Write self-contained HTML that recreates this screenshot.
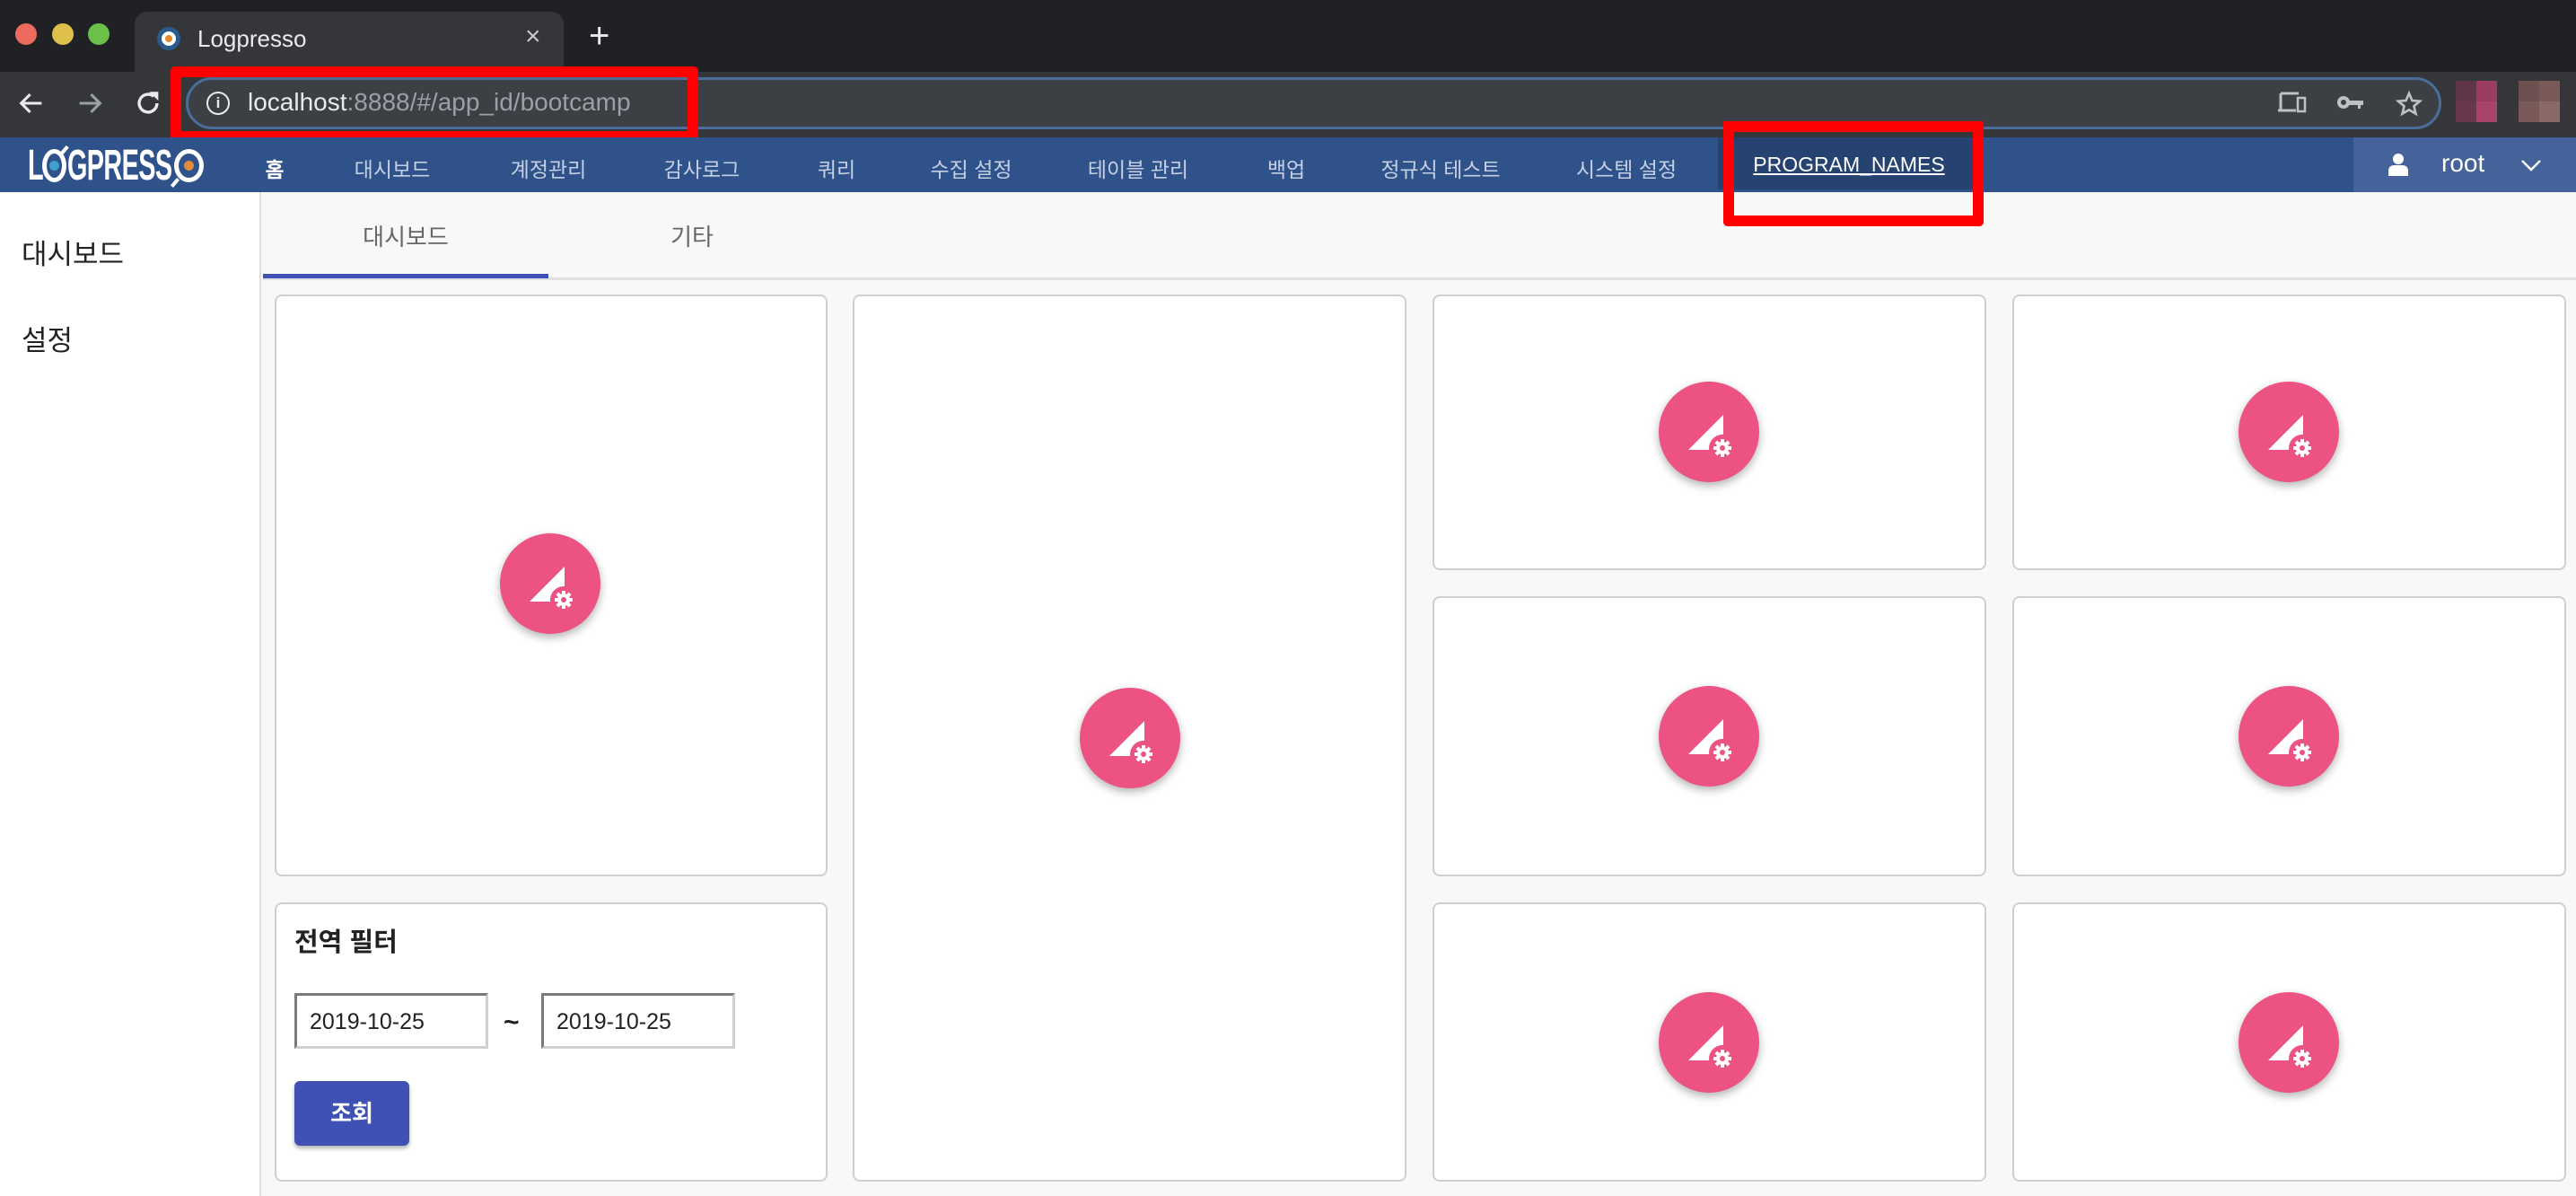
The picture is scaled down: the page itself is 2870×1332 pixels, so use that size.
<!DOCTYPE html>
<html><head><meta charset="utf-8">
<style>
*{box-sizing:border-box;margin:0;padding:0}
body{width:2870px;height:1332px;overflow:hidden;background:#f8f8f8;font-family:"Liberation Sans","Noto Sans CJK KR",sans-serif;position:relative}
.abs{position:absolute}
.card{position:absolute;background:#fff;border:2px solid #cfcfcf;border-radius:8px}
.fab{position:absolute;width:112px;height:112px;border-radius:50%;background:#ec5282;box-shadow:0 4px 10px rgba(0,0,0,.3);margin:-56px 0 0 -56px}
.fab svg{position:absolute;left:0;top:0}
.nav{position:absolute;top:170px;font-size:23px;color:#c5d0e4;transform:translateX(-50%);white-space:nowrap}
</style></head><body>
<!-- tab strip -->
<div class="abs" style="left:0;top:0;width:2870px;height:80px;background:#202124"></div>
<div class="abs" style="left:17px;top:26px;width:24px;height:24px;border-radius:50%;background:#ec6a5e"></div>
<div class="abs" style="left:58px;top:26px;width:24px;height:24px;border-radius:50%;background:#e0c04c"></div>
<div class="abs" style="left:98px;top:26px;width:24px;height:24px;border-radius:50%;background:#6cc04a"></div>
<div class="abs" style="left:150px;top:13px;width:478px;height:70px;background:#35363a;border-radius:14px 14px 0 0"></div>
<div class="abs" style="left:175px;top:30px;width:26px;height:26px;border-radius:50%;background:#fff;border:5px solid #2b5a8c"></div>
<div class="abs" style="left:184px;top:39px;width:8px;height:8px;border-radius:50%;background:#e68a2e"></div>
<div class="abs" style="left:220px;top:28px;font-size:26px;color:#e8eaed">Logpresso</div>
<div class="abs" style="left:585px;top:24px;font-size:30px;color:#c8c8c8">×</div>
<div class="abs" style="left:656px;top:18px;font-size:40px;color:#e8eaed">+</div>
<!-- toolbar -->
<div class="abs" style="left:0;top:80px;width:2870px;height:73px;background:#35363a"></div>
<svg class="abs" style="left:18px;top:98px" width="34" height="34" viewBox="0 0 24 24"><path d="M20 12H5M11 5l-7 7 7 7" stroke="#e8eaed" stroke-width="2.2" fill="none"/></svg>
<svg class="abs" style="left:83px;top:98px" width="34" height="34" viewBox="0 0 24 24"><path d="M4 12h15M13 5l7 7-7 7" stroke="#9aa0a6" stroke-width="2.2" fill="none"/></svg>
<svg class="abs" style="left:148px;top:98px" width="34" height="34" viewBox="0 0 24 24"><path d="M19 12a7 7 0 1 1-2.5-5.4" stroke="#e8eaed" stroke-width="2.4" fill="none"/><path d="M13 3h7v7z" fill="#e8eaed"/></svg>
<div class="abs" style="left:207px;top:86px;width:2513px;height:58px;border-radius:29px;background:#3c3f43;border:3px solid #4a6e99"></div>
<div class="abs" style="left:230px;top:102px;width:26px;height:26px;border-radius:50%;border:2.5px solid #e8eaed;color:#e8eaed;font-size:17px;font-weight:bold;text-align:center;line-height:21px">i</div>
<div class="abs" style="left:276px;top:98px;font-size:28px;color:#9aa0a6"><span style="color:#e8eaed">localhost</span>:8888/#/app_id/bootcamp</div>
<div class="abs" style="left:190px;top:74px;width:588px;height:84px;border:12px solid #ff0000;border-radius:5px"></div>
<svg class="abs" style="left:2538px;top:102px" width="32" height="26" viewBox="0 0 32 26"><path d="M3 2h20M3 2v18M0 21h20" stroke="#bdc1c6" stroke-width="3" fill="none"/><rect x="22" y="7" width="8" height="15" stroke="#bdc1c6" stroke-width="2.5" fill="none"/></svg>
<svg class="abs" style="left:2604px;top:104px" width="30" height="20" viewBox="0 0 30 20"><circle cx="7" cy="10" r="5" stroke="#bdc1c6" stroke-width="4" fill="none"/><path d="M12 8h17v5h-3v4h-3v-4h-11z" fill="#bdc1c6"/></svg>
<svg class="abs" style="left:2668px;top:100px" width="32" height="32" viewBox="0 0 24 24"><path d="M12 3l2.6 6 6.4.5-4.9 4.2 1.5 6.3L12 16.7 6.4 20l1.5-6.3L3 9.5l6.4-.5z" stroke="#bdc1c6" stroke-width="2" fill="none"/></svg>
<div class="abs" style="left:2736px;top:90px;width:23px;height:23px;background:#5e3549"></div>
<div class="abs" style="left:2736px;top:113px;width:23px;height:23px;background:#6a364e"></div>
<div class="abs" style="left:2759px;top:90px;width:23px;height:23px;background:#9a3d60"></div>
<div class="abs" style="left:2759px;top:113px;width:23px;height:23px;background:#a84467"></div>
<div class="abs" style="left:2806px;top:90px;width:23px;height:23px;background:#6e5050"></div>
<div class="abs" style="left:2806px;top:113px;width:23px;height:23px;background:#7a5959"></div>
<div class="abs" style="left:2829px;top:90px;width:23px;height:23px;background:#7a5a58"></div>
<div class="abs" style="left:2829px;top:113px;width:23px;height:23px;background:#8a6a66"></div>
<!-- navbar -->
<div class="abs" style="left:0;top:153px;width:2870px;height:61px;background:#2f528a"></div>
<div class="abs" style="left:1914px;top:153px;width:286px;height:58px;background:#264270"></div>
<div class="abs" style="left:2622px;top:153px;width:248px;height:61px;background:#45639a"></div>
<!-- logo -->
<div class="abs" style="left:31px;top:163px;font-size:48px;line-height:44px;color:#fff;font-weight:bold;transform:scaleX(.6);transform-origin:left top">L</div>
<div class="abs" style="left:47px;top:166px;width:27px;height:37px;border-radius:50%;border:5px solid #fff"></div>
<div class="abs" style="left:55px;top:179px;width:11px;height:11px;border-radius:50%;background:#3fa0cc"></div>
<div class="abs" style="left:70px;top:162px;width:4px;height:10px;background:#fff;transform:rotate(40deg)"></div>
<div class="abs" style="left:75px;top:163px;font-size:48px;line-height:44px;color:#fff;font-weight:bold;transform:scaleX(.6);transform-origin:left top;white-space:nowrap;letter-spacing:-1px">GPRESS</div>
<div class="abs" style="left:194px;top:166px;width:33px;height:37px;border-radius:50%;border:5px solid #fff"></div>
<div class="abs" style="left:205px;top:179px;width:11px;height:11px;border-radius:50%;background:#e08a3a"></div>
<div class="abs" style="left:193px;top:198px;width:4px;height:11px;background:#fff;transform:rotate(40deg)"></div>
<div class="nav" style="left:306px;color:#fff;font-weight:bold">홈</div>
<div class="nav" style="left:437px">대시보드</div>
<div class="nav" style="left:611px">계정관리</div>
<div class="nav" style="left:782px">감사로그</div>
<div class="nav" style="left:932px">쿼리</div>
<div class="nav" style="left:1082px">수집 설정</div>
<div class="nav" style="left:1268px">테이블 관리</div>
<div class="nav" style="left:1433px">백업</div>
<div class="nav" style="left:1605px">정규식 테스트</div>
<div class="nav" style="left:1812px">시스템 설정</div>
<div class="nav" style="left:2060px;color:#fff;text-decoration:underline;font-size:23px">PROGRAM_NAMES</div>
<div class="abs" style="left:1920px;top:135px;width:290px;height:117px;border:12px solid #ff0000;border-top:none;border-radius:0 0 5px 5px"></div>
<div class="abs" style="left:1920px;top:135px;width:290px;height:12px;background:#ff0000;border-radius:5px 5px 0 0"></div>
<svg class="abs" style="left:2660px;top:170px" width="24" height="26" viewBox="0 0 24 26"><circle cx="12" cy="7" r="6" fill="#fff"/><path d="M1 26v-6a6 6 0 0 1 6-6h10a6 6 0 0 1 6 6v6z" fill="#fff"/></svg>
<div class="abs" style="left:2720px;top:166px;font-size:28px;color:#fff">root</div>
<svg class="abs" style="left:2808px;top:176px" width="24" height="16" viewBox="0 0 24 16"><path d="M2 3l10 10 10-10" stroke="#fff" stroke-width="2.5" fill="none"/></svg>
<!-- sidebar -->
<div class="abs" style="left:0;top:214px;width:291px;height:1118px;background:#fff;border-right:2px solid #e0e0e0"></div>
<div class="abs" style="left:24px;top:258px;font-size:31px;color:#222">대시보드</div>
<div class="abs" style="left:24px;top:354px;font-size:31px;color:#222">설정</div>
<!-- tabs -->
<div class="abs" style="left:293px;top:309px;width:2577px;height:3px;background:#e0e0e0"></div>
<div class="abs" style="left:293px;top:305px;width:318px;height:5px;background:#3f51b5"></div>
<div class="abs" style="left:452px;top:244px;font-size:26px;color:#666;transform:translateX(-50%)">대시보드</div>
<div class="abs" style="left:771px;top:244px;font-size:26px;color:#666;transform:translateX(-50%)">기타</div>
<!-- cards -->
<div class="card" style="left:306px;top:328px;width:616px;height:648px"></div>
<div class="card" style="left:950px;top:328px;width:617px;height:988px"></div>
<div class="card" style="left:1596px;top:328px;width:617px;height:307px"></div>
<div class="card" style="left:2242px;top:328px;width:617px;height:307px"></div>
<div class="card" style="left:1596px;top:664px;width:617px;height:312px"></div>
<div class="card" style="left:2242px;top:664px;width:617px;height:312px"></div>
<div class="card" style="left:1596px;top:1005px;width:617px;height:311px"></div>
<div class="card" style="left:2242px;top:1005px;width:617px;height:311px"></div>
<div class="card" style="left:306px;top:1005px;width:616px;height:311px"></div>
<!-- fabs -->
<div class="fab" style="left:613px;top:650px"><svg width="112" height="112" viewBox="-56 -56 112 112"><path d="M-23 20L16-19V20z" fill="#fff"/><circle cx="15" cy="18" r="15" fill="#ec5282"/><g fill="#fff"><circle cx="15" cy="18" r="7"/><rect x="13" y="8" width="4" height="20"/><rect x="5" y="16" width="20" height="4"/><rect x="13" y="8" width="4" height="20" transform="rotate(45 15 18)"/><rect x="13" y="8" width="4" height="20" transform="rotate(-45 15 18)"/></g><circle cx="15" cy="18" r="3" fill="#ec5282"/></svg></div>
<div class="fab" style="left:1259px;top:822px"><svg width="112" height="112" viewBox="-56 -56 112 112"><path d="M-23 20L16-19V20z" fill="#fff"/><circle cx="15" cy="18" r="15" fill="#ec5282"/><g fill="#fff"><circle cx="15" cy="18" r="7"/><rect x="13" y="8" width="4" height="20"/><rect x="5" y="16" width="20" height="4"/><rect x="13" y="8" width="4" height="20" transform="rotate(45 15 18)"/><rect x="13" y="8" width="4" height="20" transform="rotate(-45 15 18)"/></g><circle cx="15" cy="18" r="3" fill="#ec5282"/></svg></div>
<div class="fab" style="left:1904px;top:481px"><svg width="112" height="112" viewBox="-56 -56 112 112"><path d="M-23 20L16-19V20z" fill="#fff"/><circle cx="15" cy="18" r="15" fill="#ec5282"/><g fill="#fff"><circle cx="15" cy="18" r="7"/><rect x="13" y="8" width="4" height="20"/><rect x="5" y="16" width="20" height="4"/><rect x="13" y="8" width="4" height="20" transform="rotate(45 15 18)"/><rect x="13" y="8" width="4" height="20" transform="rotate(-45 15 18)"/></g><circle cx="15" cy="18" r="3" fill="#ec5282"/></svg></div>
<div class="fab" style="left:2550px;top:481px"><svg width="112" height="112" viewBox="-56 -56 112 112"><path d="M-23 20L16-19V20z" fill="#fff"/><circle cx="15" cy="18" r="15" fill="#ec5282"/><g fill="#fff"><circle cx="15" cy="18" r="7"/><rect x="13" y="8" width="4" height="20"/><rect x="5" y="16" width="20" height="4"/><rect x="13" y="8" width="4" height="20" transform="rotate(45 15 18)"/><rect x="13" y="8" width="4" height="20" transform="rotate(-45 15 18)"/></g><circle cx="15" cy="18" r="3" fill="#ec5282"/></svg></div>
<div class="fab" style="left:1904px;top:820px"><svg width="112" height="112" viewBox="-56 -56 112 112"><path d="M-23 20L16-19V20z" fill="#fff"/><circle cx="15" cy="18" r="15" fill="#ec5282"/><g fill="#fff"><circle cx="15" cy="18" r="7"/><rect x="13" y="8" width="4" height="20"/><rect x="5" y="16" width="20" height="4"/><rect x="13" y="8" width="4" height="20" transform="rotate(45 15 18)"/><rect x="13" y="8" width="4" height="20" transform="rotate(-45 15 18)"/></g><circle cx="15" cy="18" r="3" fill="#ec5282"/></svg></div>
<div class="fab" style="left:2550px;top:820px"><svg width="112" height="112" viewBox="-56 -56 112 112"><path d="M-23 20L16-19V20z" fill="#fff"/><circle cx="15" cy="18" r="15" fill="#ec5282"/><g fill="#fff"><circle cx="15" cy="18" r="7"/><rect x="13" y="8" width="4" height="20"/><rect x="5" y="16" width="20" height="4"/><rect x="13" y="8" width="4" height="20" transform="rotate(45 15 18)"/><rect x="13" y="8" width="4" height="20" transform="rotate(-45 15 18)"/></g><circle cx="15" cy="18" r="3" fill="#ec5282"/></svg></div>
<div class="fab" style="left:1904px;top:1161px"><svg width="112" height="112" viewBox="-56 -56 112 112"><path d="M-23 20L16-19V20z" fill="#fff"/><circle cx="15" cy="18" r="15" fill="#ec5282"/><g fill="#fff"><circle cx="15" cy="18" r="7"/><rect x="13" y="8" width="4" height="20"/><rect x="5" y="16" width="20" height="4"/><rect x="13" y="8" width="4" height="20" transform="rotate(45 15 18)"/><rect x="13" y="8" width="4" height="20" transform="rotate(-45 15 18)"/></g><circle cx="15" cy="18" r="3" fill="#ec5282"/></svg></div>
<div class="fab" style="left:2550px;top:1161px"><svg width="112" height="112" viewBox="-56 -56 112 112"><path d="M-23 20L16-19V20z" fill="#fff"/><circle cx="15" cy="18" r="15" fill="#ec5282"/><g fill="#fff"><circle cx="15" cy="18" r="7"/><rect x="13" y="8" width="4" height="20"/><rect x="5" y="16" width="20" height="4"/><rect x="13" y="8" width="4" height="20" transform="rotate(45 15 18)"/><rect x="13" y="8" width="4" height="20" transform="rotate(-45 15 18)"/></g><circle cx="15" cy="18" r="3" fill="#ec5282"/></svg></div>
<!-- filter -->
<div class="abs" style="left:328px;top:1026px;font-size:29px;font-weight:bold;color:#222">전역 필터</div>
<div class="abs" style="left:328px;top:1106px;width:216px;height:62px;background:#fff;border:3px solid;border-color:#7a7a7a #cfcfcf #cfcfcf #7a7a7a;font-size:25px;color:#222;padding:15px 0 0 14px">2019-10-25</div>
<div class="abs" style="left:561px;top:1122px;font-size:30px;font-weight:bold;color:#222">~</div>
<div class="abs" style="left:603px;top:1106px;width:216px;height:62px;background:#fff;border:3px solid;border-color:#7a7a7a #cfcfcf #cfcfcf #7a7a7a;font-size:25px;color:#222;padding:15px 0 0 14px">2019-10-25</div>
<div class="abs" style="left:328px;top:1204px;width:128px;height:72px;background:#3f51b5;border-radius:6px;box-shadow:0 3px 5px rgba(0,0,0,.3);color:#fff;font-size:26px;font-weight:bold;text-align:center;line-height:72px">조회</div>
</body></html>
